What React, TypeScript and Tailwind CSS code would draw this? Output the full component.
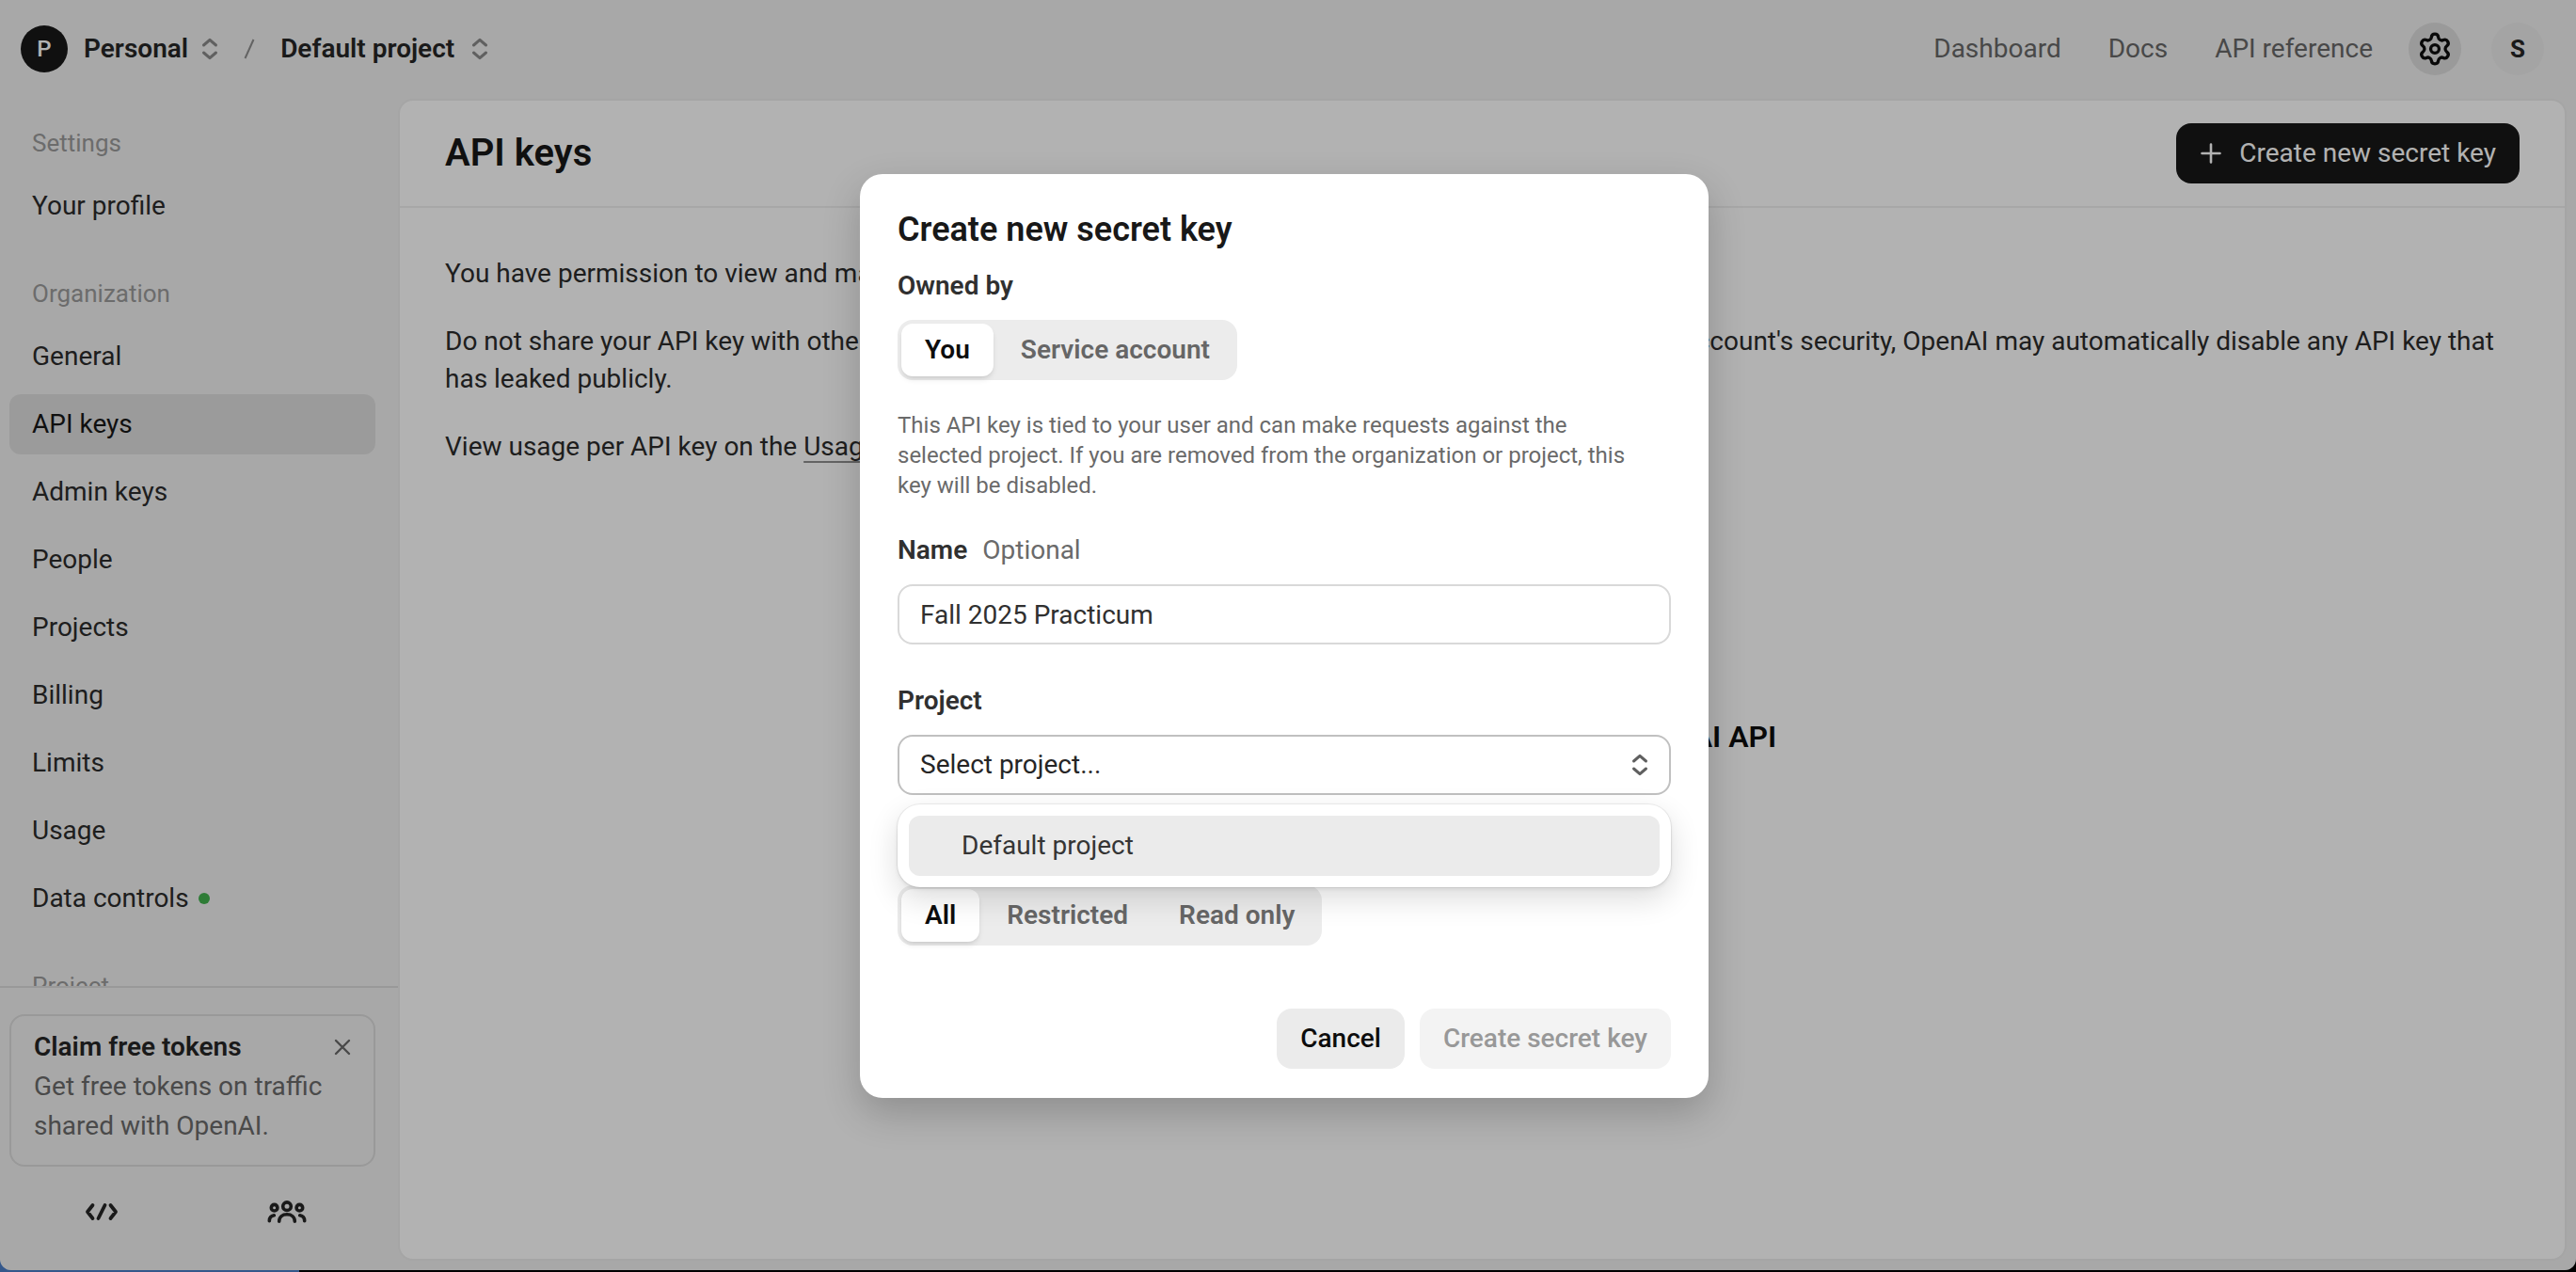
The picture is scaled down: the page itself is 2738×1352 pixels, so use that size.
import { useState } from 'react';

function UpDown({ className = '' }: { className?: string }) {
  return (
    <svg className={className} width="18" height="24" viewBox="0 0 18 24" fill="none" stroke="currentColor" strokeWidth="3" strokeLinecap="round" strokeLinejoin="round" aria-hidden="true">
      <path d="M2.5 8 9 2.3 15.5 8M2.5 16 9 21.7 15.5 16" />
    </svg>
  );
}

function Gear() {
  return (
    <svg width="38" height="38" viewBox="0 0 24 24" fill="none" stroke="currentColor" strokeWidth="2.1" strokeLinecap="round" strokeLinejoin="round" aria-hidden="true">
      <path d="M9.671 4.136a2.34 2.34 0 0 1 4.659 0 2.34 2.34 0 0 0 3.319 1.915 2.34 2.34 0 0 1 2.33 4.033 2.34 2.34 0 0 0 0 3.831 2.34 2.34 0 0 1-2.33 4.033 2.34 2.34 0 0 0-3.319 1.915 2.34 2.34 0 0 1-4.659 0 2.34 2.34 0 0 0-3.32-1.915 2.34 2.34 0 0 1-2.33-4.033 2.34 2.34 0 0 0 0-3.831A2.34 2.34 0 0 1 6.35 6.051a2.34 2.34 0 0 0 3.319-1.915" />
      <circle cx="12" cy="12" r="2.8" />
    </svg>
  );
}

function CodeIcon() {
  return (
    <svg width="36" height="20" viewBox="0 0 36 20" fill="none" stroke="currentColor" strokeWidth="3.8" strokeLinecap="round" strokeLinejoin="round" aria-hidden="true">
      <path d="M8.5 3 3 10l5.500 7M21.500 3l-7 14M27.500 3 33 10l-5.500 7" />
    </svg>
  );
}

function PeopleIcon() {
  return (
    <svg width="42" height="26" viewBox="0 0 42 26" fill="none" stroke="currentColor" strokeWidth="3.6" strokeLinecap="round" aria-hidden="true">
      <circle cx="21" cy="7.200" r="4.300" />
      <circle cx="7.600" cy="8.700" r="3.300" />
      <circle cx="34.400" cy="8.700" r="3.300" />
      <path d="M12.700 23.200c0-4.600 3.400-7.400 8.300-7.400s8.300 2.800 8.300 7.400" />
      <path d="M2.300 22.700c0-3 1.700-5.300 5-5.900M39.700 22.700c0-3-1.700-5.300-5-5.900" />
    </svg>
  );
}

const sections = [
  { title: 'Settings', items: ['Your profile'] },
  {
    title: 'Organization',
    items: ['General', 'API keys', 'Admin keys', 'People', 'Projects', 'Billing', 'Limits', 'Usage', 'Data controls'],
  },
  { title: 'Project', items: [] },
];

function Header() {
  return (
    <header className="flex h-[105px] shrink-0 items-center justify-between pr-[34px] pb-[2px] pl-[22px]">
      <div className="flex items-center font-semibold text-[#262626]">
        <span className="mr-[17px] flex size-[50px] items-center justify-center rounded-full bg-[#181818] text-[24px] font-medium text-white">P</span>
        <button className="flex items-center gap-[14px]">
          Personal
          <UpDown className="text-[#8a8a8a]" />
        </button>
        <svg className="mx-[27px] text-[#8f8f8f]" width="12" height="22" viewBox="0 0 12 22" stroke="currentColor" strokeWidth="2" aria-hidden="true">
          <path d="M1.500 21 10.500 1" />
        </svg>
        <button className="flex items-center gap-[18px]">
          Default project
          <UpDown className="text-[#8a8a8a]" />
        </button>
      </div>
      <nav className="flex items-center text-[#686868]">
        <a href="#dashboard" className="mr-[50px]">Dashboard</a>
        <a href="#docs" className="mr-[50px]">Docs</a>
        <a href="#reference" className="mr-[38px]">API reference</a>
        <button aria-label="Settings" className="mr-8 flex size-14 items-center justify-center rounded-full bg-[#dddddd] text-[#0d0d0d]">
          <Gear />
        </button>
        <button aria-label="Account" className="flex size-14 items-center justify-center rounded-full bg-[#ebebeb] text-[26px] font-bold text-[#262626]">S</button>
      </nav>
    </header>
  );
}

function Sidebar() {
  return (
    <aside className="flex w-[423px] shrink-0 flex-col">
      <nav className="min-h-0 flex-1 overflow-hidden pt-7 pr-6 pl-[10px]">
        {sections.map((section) => (
          <section key={section.title} className="mb-[42px]">
            <h2 className="mb-4 px-6 text-[26px] leading-[38px] text-[#9b9b9b]">{section.title}</h2>
            <ul className="flex flex-col gap-2">
              {section.items.map((item) => (
                <li key={item}>
                  <a href="#nav" className={item === 'API keys' ? 'flex h-16 items-center rounded-xl bg-[#dfdfdf] px-6 text-[#181818]' : 'flex h-16 items-center rounded-xl px-6 text-[#2c2c2c]'}>
                    {item}
                    {item === 'Data controls' && <span className="ml-[10px] size-3 rounded-full bg-[#42b24e]" />}
                  </a>
                </li>
              ))}
            </ul>
          </section>
        ))}
      </nav>
      <div className="shrink-0 border-t-2 border-[#dcdcdc] pt-7 pr-5 pb-12 pl-[10px]">
        <div className="mr-1 rounded-2xl border-2 border-[#dbdbdb] px-6 pt-3 pb-5 leading-[42px]">
          <div className="flex items-center justify-between">
            <h3 className="font-semibold text-[#262626]">Claim free tokens</h3>
            <button aria-label="Dismiss" className="text-[#6a6a6a]">
              <svg width="18" height="18" viewBox="0 0 18 18" stroke="currentColor" strokeWidth="2.4" strokeLinecap="round" aria-hidden="true">
                <path d="m2 2 14 14M16 2 2 16" />
              </svg>
            </button>
          </div>
          <p className="text-[#6a6a6a]">Get free tokens on traffic shared with OpenAI.</p>
        </div>
        <div className="mt-[34px] grid grid-cols-2 text-[#262626]">
          <button aria-label="Playground" className="flex h-7 items-center justify-center">
            <CodeIcon />
          </button>
          <button aria-label="Forum" className="flex h-7 items-center justify-center">
            <PeopleIcon />
          </button>
        </div>
      </div>
    </aside>
  );
}

function Main() {
  return (
    <main className="mr-[10px] mb-[10px] flex min-w-0 flex-1 flex-col rounded-2xl border-2 border-[#ececec] bg-white">
      <div className="flex h-[114px] shrink-0 items-center justify-between border-b-2 border-[#efefef] px-12">
        <h1 className="text-[40px] font-semibold text-[#181818]">API keys</h1>
        <button className="flex h-16 items-center gap-[18px] rounded-2xl bg-[#181818] px-[25px] text-white">
          <svg width="24" height="24" viewBox="0 0 24 24" stroke="currentColor" strokeWidth="2.6" strokeLinecap="round" aria-hidden="true">
            <path d="M12 2.500v19M2.500 12h19" />
          </svg>
          Create new secret key
        </button>
      </div>
      <div className="flex flex-col gap-8 px-12 pt-[50px] leading-10 text-[#2c2c2c]">
        <p>You have permission to view and manage all API keys in this organization.</p>
        <p>
          Do not share your API key with others or expose it in the browser or other client-side code. To protect your account's security, OpenAI may automatically disable any API key that has leaked publicly.
        </p>
        <p>
          View usage per API key on the <a href="#usage" className="underline decoration-[#8f8f8f] decoration-2 underline-offset-[6px]">Usage page</a>.
        </p>
      </div>
      <h2 className="mt-[264px] text-center text-[32px] leading-[48px] font-semibold text-[#0d0d0d]">Create an API key to access the OpenAI API</h2>
    </main>
  );
}

function Segmented({ name, label, options }: { name: string; label: string; options: string[] }) {
  const [value, setValue] = useState(options[0]);
  return (
    <fieldset>
      <legend className="mb-4 leading-10 font-semibold text-[#303030]">{label}</legend>
      <div className="inline-flex gap-1 rounded-2xl bg-[#ececec] p-1 align-top font-semibold">
        {options.map((o) => (
          <label key={o} className={value === o ? 'flex h-14 items-center rounded-xl bg-white px-[25px] text-[#0d0d0d] shadow-md' : 'flex h-14 items-center rounded-xl px-[25px] text-[#666666]'}>
            <input type="radio" name={name} value={o} checked={value === o} onChange={() => setValue(o)} className="sr-only" />
            {o}
          </label>
        ))}
      </div>
    </fieldset>
  );
}

function Dialog() {
  return (
    <form role="dialog" aria-labelledby="dialog-title" className="w-[902px] rounded-3xl bg-white px-10 pt-[35px] pb-[31px] shadow-[0_16px_40px_rgba(0,0,0,0.2)]">
      <h2 id="dialog-title" className="mb-4 text-[36px] leading-[48px] font-semibold text-[#181818]">Create new secret key</h2>
      <Segmented name="owner" label="Owned by" options={['You', 'Service account']} />
      <p className="mt-8 mb-[33px] pr-5 text-[24px] leading-8 text-[#6a6a6a]">
        This API key is tied to your user and can make requests against the selected project. If you are removed from the organization or project, this key will be disabled.
      </p>
      <label htmlFor="key-name" className="mb-4 flex gap-4 leading-10">
        <span className="font-semibold text-[#303030]">Name</span>
        <span className="text-[#6a6a6a]">Optional</span>
      </label>
      <input id="key-name" defaultValue="Fall 2025 Practicum" className="block h-16 w-full rounded-2xl border-2 border-[#d9d9d9] px-[22px] text-[#303030]" />
      <label htmlFor="key-project" className="mt-10 mb-4 block leading-10 font-semibold text-[#303030]">Project</label>
      <div className="relative">
        <select id="key-project" className="block h-16 w-full appearance-none rounded-2xl border-2 border-[#c0c0c0] bg-white px-[22px] text-[#262626]">
          <option>Select project...</option>
        </select>
        <UpDown className="pointer-events-none absolute top-5 right-6 text-[#5f5f5f]" />
        <ul role="listbox" aria-label="Project" className="absolute inset-x-0 top-full z-10 mt-[10px] rounded-3xl bg-white p-3 shadow-[0_0_0_1px_rgba(0,0,0,0.06),0_2px_4px_rgba(0,0,0,0.08),0_12px_32px_rgba(0,0,0,0.14)]">
          <li role="option" aria-selected="true" className="flex h-16 items-center rounded-xl bg-[#ebebeb] pl-14 text-[#353535]">Default project</li>
        </ul>
      </div>
      <div className="mt-10">
        <Segmented name="permissions" label="Permissions" options={['All', 'Restricted', 'Read only']} />
      </div>
      <div className="mt-[67px] flex justify-end gap-4">
        <button type="button" className="h-16 rounded-2xl bg-[#ebebeb] px-[25px] font-medium text-[#0d0d0d]">Cancel</button>
        <button type="button" disabled className="h-16 rounded-2xl bg-[#f3f3f3] px-[25px] font-medium text-[#989898]">Create secret key</button>
      </div>
    </form>
  );
}

export default function App() {
  return (
    <div className="flex h-screen flex-col bg-[linear-gradient(to_right,#35588b_318px,#000_318px)] pb-[2px] font-['Roboto',sans-serif] text-[28px] leading-9">
      <div className="relative flex min-h-0 flex-1 flex-col overflow-hidden rounded-b-xl bg-[#f1f1f1]">
        <Header />
        <div className="flex min-h-0 flex-1">
          <Sidebar />
          <Main />
        </div>
        <div className="absolute inset-0 flex items-center justify-center bg-black/30 pt-[2px] pr-2">
          <Dialog />
        </div>
      </div>
    </div>
  );
}
